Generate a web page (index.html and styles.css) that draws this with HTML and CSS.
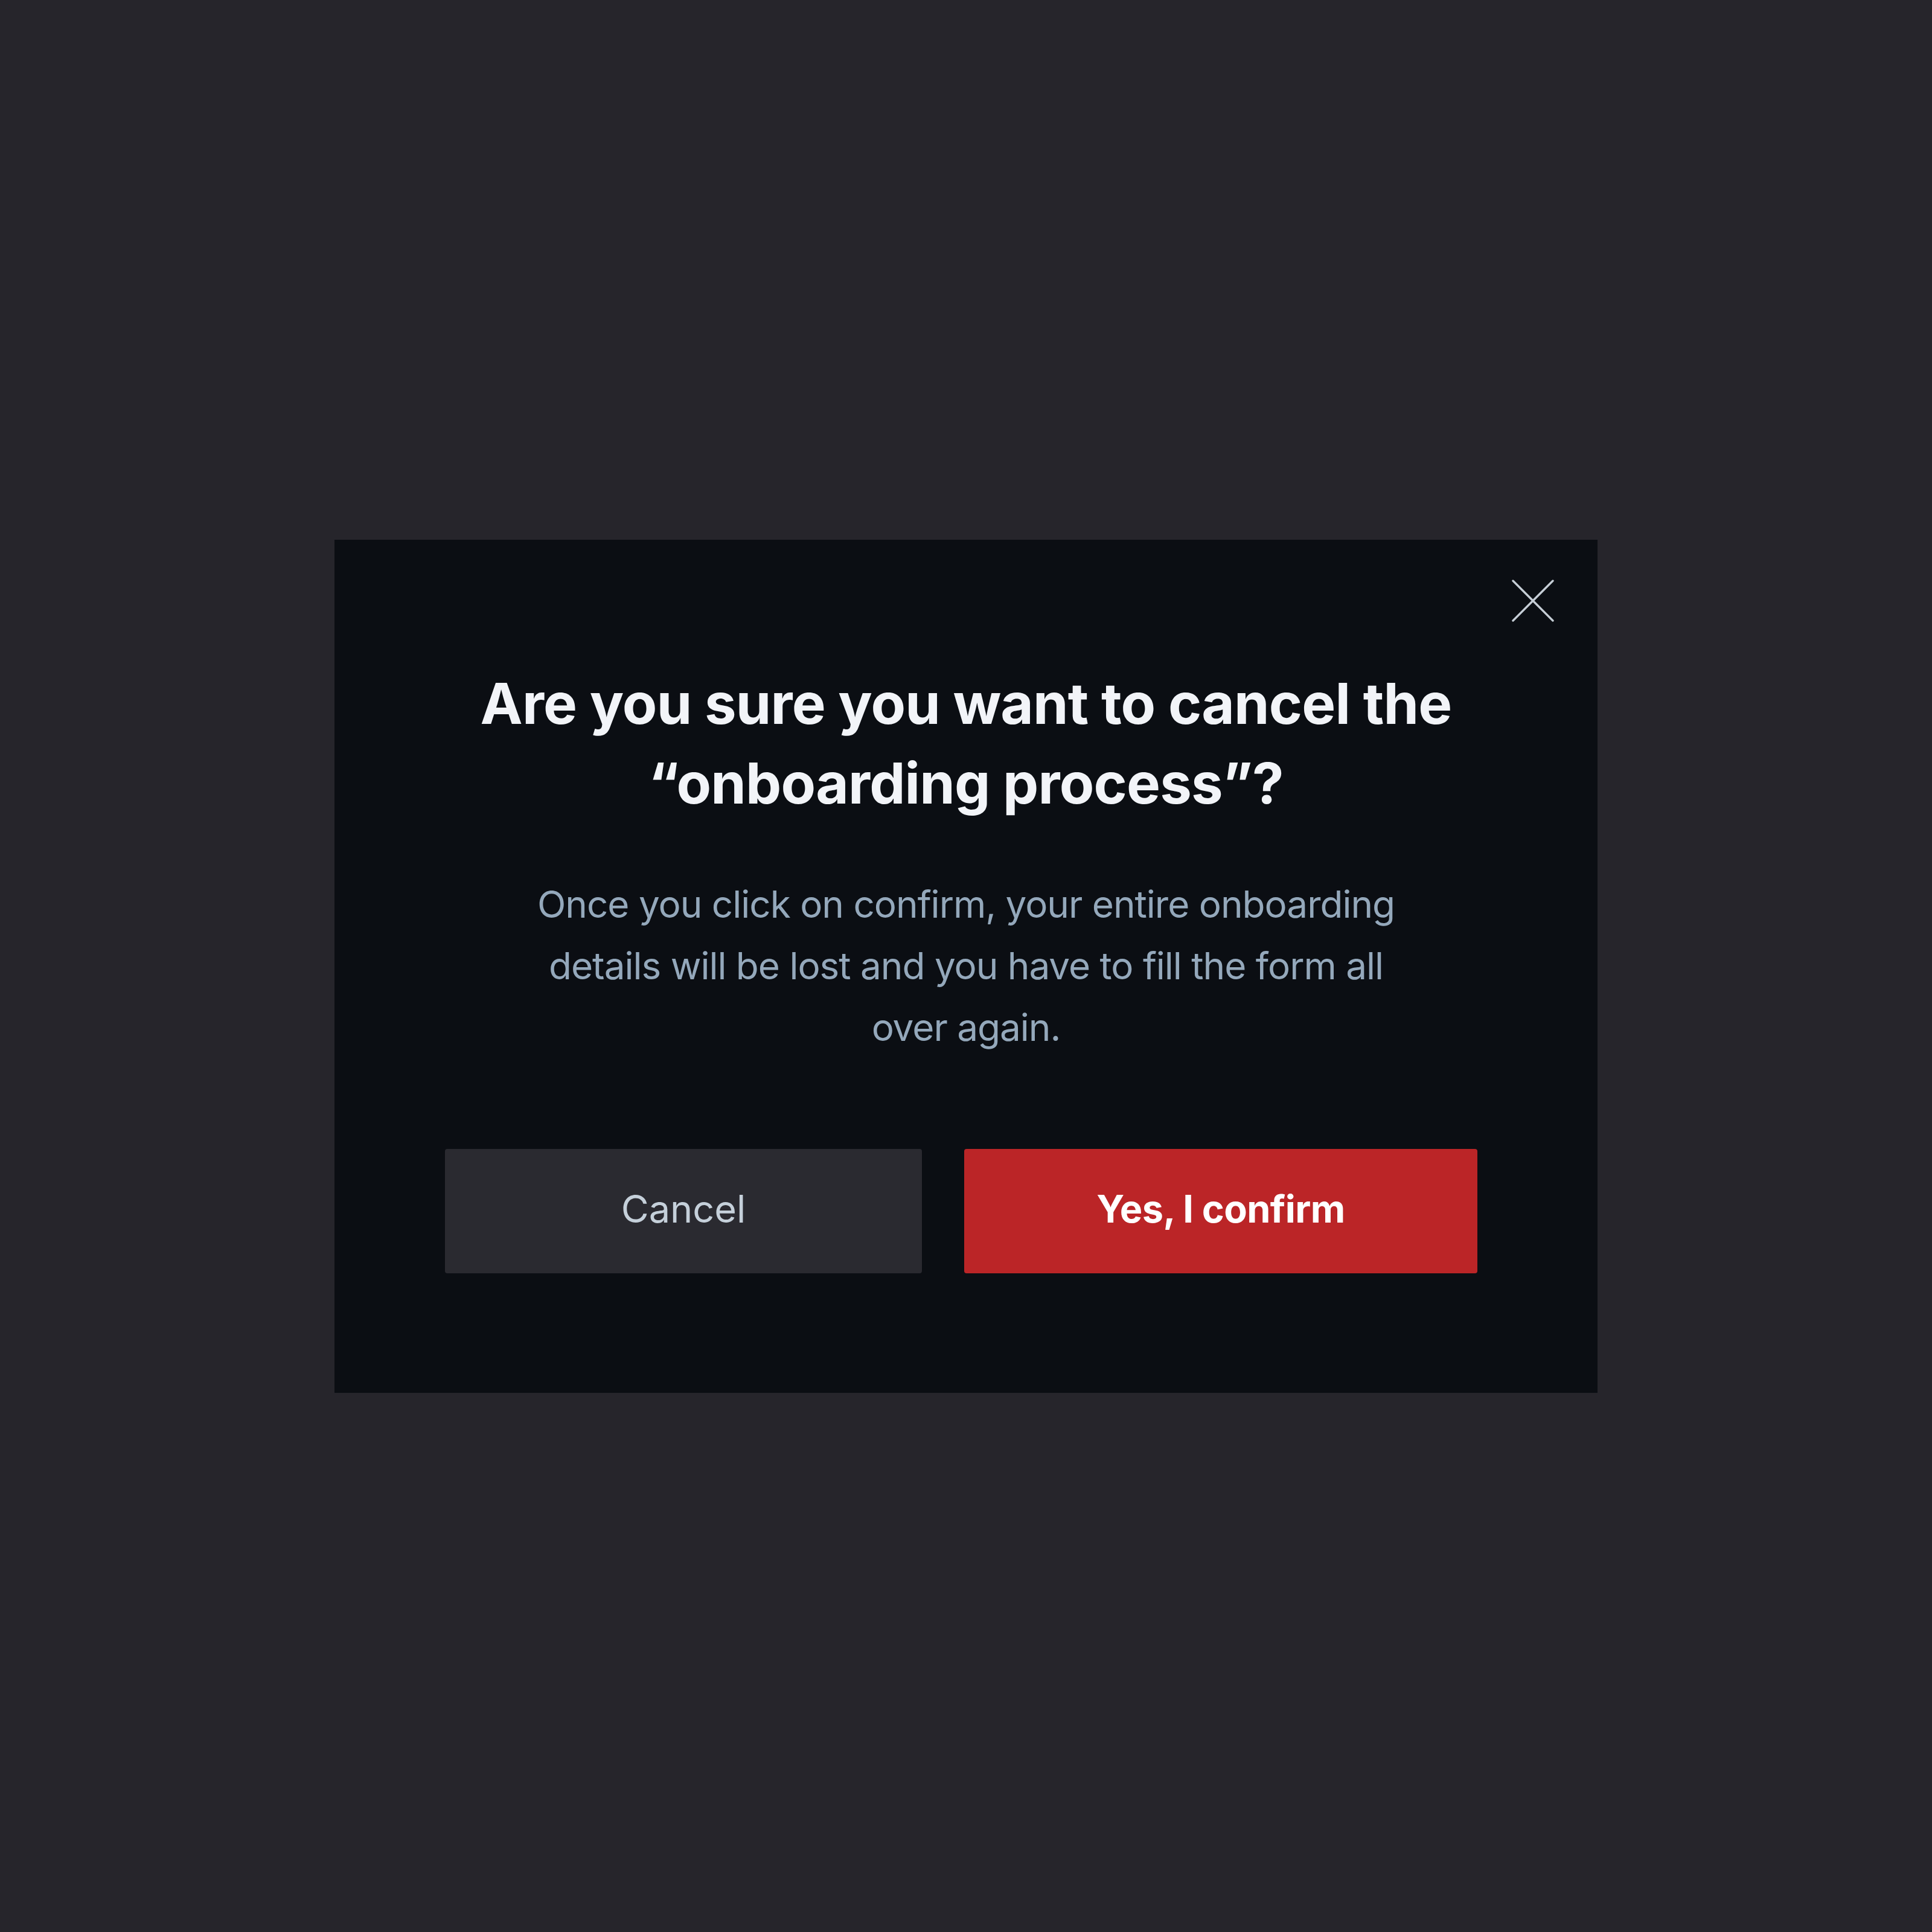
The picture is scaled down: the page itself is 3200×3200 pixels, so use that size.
FILE: index.html
```html
<!DOCTYPE html>
<html lang="en">
<head>
<meta charset="utf-8">
<title>Cancel onboarding</title>
<link rel="stylesheet" href="styles.css">
</head>
<body>
<div class="page">
  <div class="modal" role="dialog">
    <button class="close" aria-label="Close">
      <svg viewBox="0 0 70 70" width="70" height="70"><path d="M2 2 L68 68 M68 2 L2 68" stroke="#c6ced6" stroke-width="3.4" stroke-linecap="round" fill="none"/></svg>
    </button>
    <h1 class="title">Are you sure you want to cancel the “onboarding process”?</h1>
    <p class="text">Once you click on confirm, your entire onboarding details will be lost and you have to fill the form all over again.</p>
    <div class="actions">
      <button class="btn btn-cancel">Cancel</button>
      <button class="btn btn-confirm">Yes, I confirm</button>
    </div>
  </div>
</div>
</body>
</html>
```
FILE: styles.css
```css
html, body {
  margin: 0;
  padding: 0;
  background: #26252b;
}
.page {
  min-height: 100vh;
  display: flex;
  align-items: center;
  justify-content: center;
  font-family: Inter, "Liberation Sans", sans-serif;
}
.modal {
  position: relative;
  box-sizing: border-box;
  width: 2092px;
  height: 1413px;
  background: #0b0e13;
  padding-top: 205px;
  display: flex;
  flex-direction: column;
  align-items: center;
}
.close {
  position: absolute;
  top: 66px;
  right: 72px;
  width: 70px;
  height: 70px;
  padding: 0;
  border: 0;
  background: transparent;
  display: block;
}
.close svg { display: block; }
.title {
  margin: 0;
  width: 1700px;
  text-align: center;
  color: #f2f4f8;
  font-size: 94px;
  line-height: 132px;
  font-weight: 700;
  letter-spacing: -0.8px;
}
.text {
  margin: 84px 0 0;
  width: 1450px;
  text-align: center;
  color: #94a8bb;
  font-size: 62px;
  line-height: 102px;
  font-weight: 400;
  letter-spacing: -1px;
}
.actions {
  align-self: stretch;
  margin-top: 150px;
  padding: 0 199px 0 183px;
  display: flex;
  gap: 70px;
}
.btn {
  box-sizing: border-box;
  height: 206px;
  border: 0;
  border-radius: 4px;
  font-family: Inter, "Liberation Sans", sans-serif;
  font-size: 63px;
  padding: 0 0 8px;
}
.btn-cancel {
  width: 790px;
  background: #2a2a30;
  color: #c5d0da;
  font-weight: 400;
}
.btn-confirm {
  width: 850px;
  background: #bb2527;
  color: #ffffff;
  font-weight: 700;
  letter-spacing: -0.6px;
}
```
